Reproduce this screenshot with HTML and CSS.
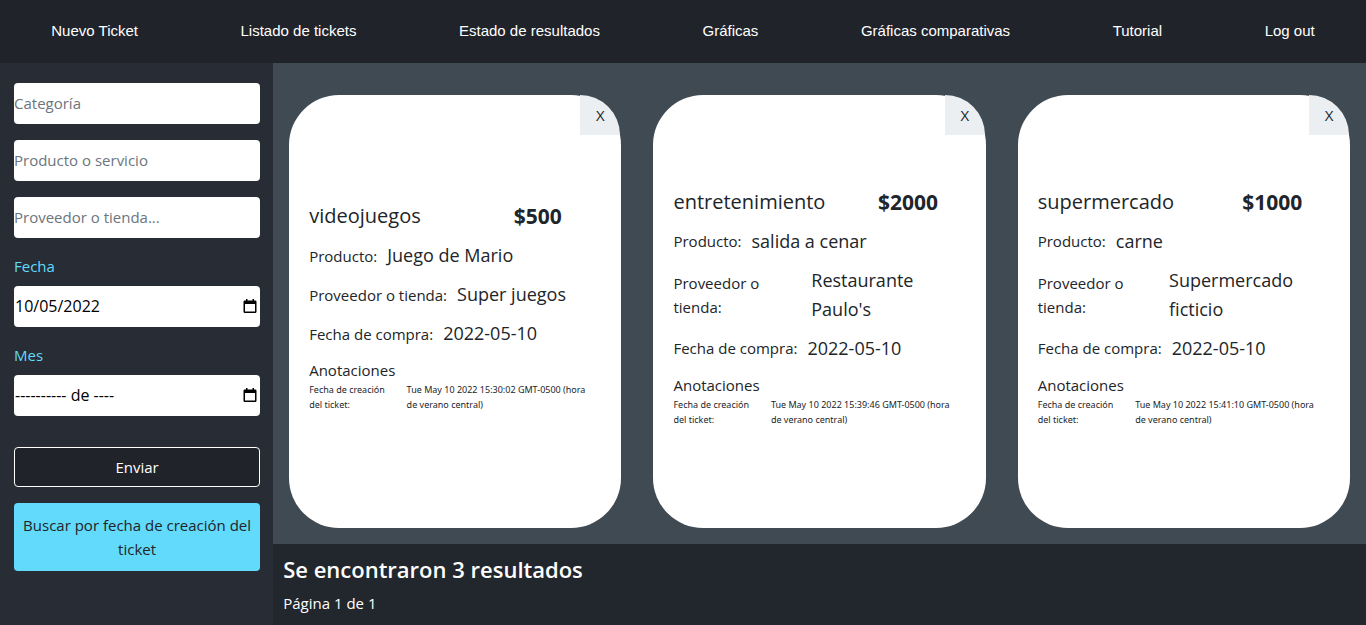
FILE: index.html
```html
<!DOCTYPE html>
<html lang="es">
<head>
<meta charset="utf-8">
<meta name="viewport" content="width=device-width, initial-scale=1">
<title>Listado de tickets</title>
<link rel="stylesheet" href="styles.css">
</head>
<body>
<nav class="navbar">
  <a href="#">Nuevo Ticket</a>
  <a href="#">Listado de tickets</a>
  <a href="#">Estado de resultados</a>
  <a href="#">Gráficas</a>
  <a href="#">Gráficas comparativas</a>
  <a href="#">Tutorial</a>
  <a href="#">Log out</a>
</nav>
<div class="layout">
  <form class="filters">
    <input class="field" type="text" placeholder="Categoría" aria-label="Categoría">
    <input class="field" type="text" placeholder="Producto o servicio" aria-label="Producto o servicio">
    <input class="field" type="text" placeholder="Proveedor o tienda..." aria-label="Proveedor o tienda">
    <div class="group">
      <label for="fecha">Fecha</label>
      <div class="picker">
        <input class="picker-input" id="fecha" type="text" value="10/05/2022">
        <button class="picker-button" type="button" aria-label="Abrir calendario">
          <svg viewBox="0 0 14 15" width="14" height="15"><path fill="currentColor" d="M3 0h1.500v1.500h5V0H11v1.500h1.200A1.300 1.300 0 0 1 13.500 2.800v10A1.300 1.300 0 0 1 12.200 14H1.800A1.300 1.300 0 0 1 .5 12.800v-10A1.300 1.300 0 0 1 1.800 1.500H3zM2 5v7.500h10V5z"/></svg>
        </button>
      </div>
    </div>
    <div class="group">
      <label for="mes">Mes</label>
      <div class="picker">
        <input class="picker-input" id="mes" type="text" value="---------- de ----">
        <button class="picker-button" type="button" aria-label="Abrir calendario de meses">
          <svg viewBox="0 0 14 15" width="14" height="15"><path fill="currentColor" d="M3 0h1.500v1.500h5V0H11v1.500h1.200A1.300 1.300 0 0 1 13.500 2.800v10A1.300 1.300 0 0 1 12.200 14H1.800A1.300 1.300 0 0 1 .5 12.800v-10A1.300 1.300 0 0 1 1.800 1.500H3zM2 5v7.500h10V5z"/></svg>
        </button>
      </div>
    </div>
    <button class="submit" type="submit">Enviar</button>
    <button class="switch" type="button">Buscar por fecha de creación del ticket</button>
  </form>
  <main class="content">
    <section class="cards">
      <article class="card">
        <button class="close" type="button" aria-label="Eliminar ticket">X</button>
        <div class="heading"><span class="category">videojuegos</span><strong class="price">$500</strong></div>
        <div class="row"><span>Producto:</span><span class="value">Juego de Mario</span></div>
        <div class="row"><span>Proveedor o tienda:</span><span class="value">Super juegos</span></div>
        <div class="row"><span>Fecha de compra:</span><span class="value">2022-05-10</span></div>
        <div class="notes">Anotaciones</div>
        <div class="created"><span>Fecha de creación del ticket:</span><span>Tue May 10 2022 15:30:02 GMT-0500 (hora de verano central)</span></div>
      </article>
      <article class="card">
        <button class="close" type="button" aria-label="Eliminar ticket">X</button>
        <div class="heading"><span class="category">entretenimiento</span><strong class="price">$2000</strong></div>
        <div class="row"><span>Producto:</span><span class="value">salida a cenar</span></div>
        <div class="row"><span>Proveedor o tienda:</span><span class="value">Restaurante Paulo's</span></div>
        <div class="row"><span>Fecha de compra:</span><span class="value">2022-05-10</span></div>
        <div class="notes">Anotaciones</div>
        <div class="created"><span>Fecha de creación del ticket:</span><span>Tue May 10 2022 15:39:46 GMT-0500 (hora de verano central)</span></div>
      </article>
      <article class="card">
        <button class="close" type="button" aria-label="Eliminar ticket">X</button>
        <div class="heading"><span class="category">supermercado</span><strong class="price">$1000</strong></div>
        <div class="row"><span>Producto:</span><span class="value">carne</span></div>
        <div class="row"><span>Proveedor o tienda:</span><span class="value">Supermercado ficticio</span></div>
        <div class="row"><span>Fecha de compra:</span><span class="value">2022-05-10</span></div>
        <div class="notes">Anotaciones</div>
        <div class="created"><span>Fecha de creación del ticket:</span><span>Tue May 10 2022 15:41:10 GMT-0500 (hora de verano central)</span></div>
      </article>
    </section>
    <footer class="summary">
      <h2>Se encontraron 3 resultados</h2>
      <p>Página 1 de 1</p>
    </footer>
  </main>
</div>
</body>
</html>
```
FILE: styles.css
```css
* {
  box-sizing: border-box;
}

body {
  display: flex;
  flex-direction: column;
  min-height: 100vh;
  margin: 0;
  background: #282c34;
  color: #212529;
  font-family: "Open Sans", "Noto Sans", sans-serif;
  font-size: 15px;
  line-height: 24px;
}

button,
input {
  margin: 0;
  border: 0;
  font: inherit;
}

button {
  cursor: pointer;
}

.navbar {
  display: flex;
  justify-content: space-around;
  align-items: center;
  padding: 19px 0 20px;
  background: #20232a;
  font-family: "Liberation Sans", Arial, sans-serif;
}

.navbar a {
  color: #fff;
  text-decoration: none;
}

.layout {
  display: grid;
  grid-template-columns: 1fr 4fr;
  flex: 1;
}

.filters {
  display: flex;
  flex-direction: column;
  gap: 16px;
  padding: 20px 13px 16px 14px;
}

.field,
.picker {
  width: 100%;
  height: 41px;
  border-radius: 4px;
  background: #fff;
  color: #000;
}

.field {
  padding: 0 0 2px;
}

.field::placeholder {
  color: #6c757d;
  opacity: 1;
}

.group {
  display: flex;
  flex-direction: column;
  gap: 8px;
}

.group label {
  color: #61dafb;
}

.picker {
  display: flex;
  align-items: center;
  padding: 0 3px 0 1px;
}

.picker-input {
  flex: 1;
  min-width: 0;
  padding: 0 0 2px;
  background: transparent;
  color: #000;
  font-size: 16px;
}

.picker-button {
  display: flex;
  padding: 0;
  background: transparent;
  color: #000;
}

.submit {
  margin-top: 15px;
  padding: 7px;
  border: 1px solid #fff;
  border-radius: 4px;
  background: #20232a;
  color: #fff;
}

.switch {
  padding: 10px 6px;
  border-radius: 4px;
  background: #61dafb;
  color: #212529;
}

.content {
  display: flex;
  flex-direction: column;
  min-width: 0;
}

.cards {
  display: grid;
  grid-template-columns: repeat(3, 1fr);
  gap: 32px;
  flex: 1;
  padding: 32px 16px 16px;
  background: #404a52;
}

.card {
  position: relative;
  display: flex;
  flex-direction: column;
  justify-content: center;
  gap: 10px;
  padding: 20px 20px 30px;
  border-radius: 50px;
  background: #fff;
}

.close {
  position: absolute;
  top: 0;
  right: 1px;
  width: 40px;
  height: 40px;
  padding: 0;
  border-radius: 0 40px 0 0;
  background: #ebeff2;
  color: #212529;
}

.heading {
  display: grid;
  grid-template-columns: 7fr 3fr;
  font-size: 20px;
  line-height: 30px;
}

.price {
  font-size: 21px;
  font-weight: 700;
}

.row {
  display: flex;
  align-items: center;
  gap: 10px;
}

.value {
  font-size: 18px;
  line-height: 29px;
}

.created {
  display: grid;
  grid-template-columns: 1fr 2fr;
  margin-top: -10px;
  font-family: "Noto Sans", "Open Sans", sans-serif;
  font-size: 9px;
  line-height: 15px;
}

.created span {
  padding-right: 8px;
}

.summary {
  padding: 10px 10px 10px;
  background: #22272e;
  color: #fff;
}

.summary h2 {
  margin: 0 0 7px;
  font-size: 22px;
  font-weight: 600;
  line-height: 30px;
}

.summary p {
  margin: 0;
}
```
